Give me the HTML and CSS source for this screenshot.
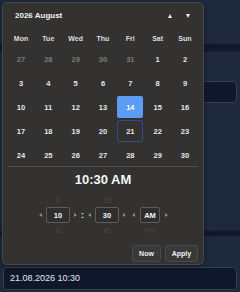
FILE: index.html
```html
<!DOCTYPE html>
<html>
<head>
<meta charset="utf-8">
<link rel="stylesheet" href="styles.css">
</head>
<body>
<div class="page">
  <div class="band band-top"></div>
  <div class="field field-mid"></div>
  <div class="band band-low"></div>
  <div class="field field-main">21.08.2026 10:30</div>

  <div class="picker">
    <div class="head">
      <span class="title">2026 August</span>
      <span class="navs"><span class="tri up"></span><span class="tri down"></span></span>
    </div>
    <div class="weekdays">
      <span>Mon</span><span>Tue</span><span>Wed</span><span>Thu</span><span>Fri</span><span>Sat</span><span>Sun</span>
    </div>
    <div class="days">
      <span class="d other">27</span><span class="d other">28</span><span class="d other">29</span><span class="d other">30</span><span class="d other">31</span><span class="d">1</span><span class="d">2</span>
      <span class="d">3</span><span class="d">4</span><span class="d">5</span><span class="d">6</span><span class="d">7</span><span class="d">8</span><span class="d">9</span>
      <span class="d">10</span><span class="d">11</span><span class="d">12</span><span class="d">13</span><span class="d sel">14</span><span class="d">15</span><span class="d">16</span>
      <span class="d">17</span><span class="d">18</span><span class="d">19</span><span class="d">20</span><span class="d today">21</span><span class="d">22</span><span class="d">23</span>
      <span class="d">24</span><span class="d">25</span><span class="d">26</span><span class="d">27</span><span class="d">28</span><span class="d">29</span><span class="d">30</span>
    </div>
    <div class="sep"></div>
    <div class="clock">10:30 AM</div>
    <div class="spinner">
      <div class="unit">
        <span class="ghost">9</span>
        <div class="unit-row"><span class="arr left"></span><span class="box">10</span><span class="arr right"></span></div>
        <span class="ghost">11</span>
      </div>
      <span class="colon">:</span>
      <div class="unit">
        <span class="ghost">15</span>
        <div class="unit-row"><span class="arr left"></span><span class="box">30</span><span class="arr right"></span></div>
        <span class="ghost">45</span>
      </div>
      <div class="unit unit-ampm">
        <span class="ghost"></span>
        <div class="unit-row"><span class="arr left"></span><span class="box box-ampm">AM</span><span class="arr right"></span></div>
        <span class="ghost">PM</span>
      </div>
    </div>
    <div class="actions">
      <span class="btn btn-now">Now</span>
      <span class="btn btn-apply">Apply</span>
    </div>
  </div>
</div>
</body>
</html>
```

FILE: styles.css
```css
* { box-sizing: border-box; }
html, body { margin: 0; padding: 0; }
body {
  width: 240px;
  height: 292px;
  background: #1e293b;
  font-family: "Liberation Sans", Arial, sans-serif;
  overflow: hidden;
}
.page {
  position: relative;
  width: 240px;
  height: 292px;
  display: flex;
  flex-direction: column;
}
.band {
  height: 9px;
  background: #111a2c;
  border-top: 1px solid #1a2435;
  border-bottom: 1px solid #1a2435;
}
.band-top { margin-top: 43px; }
.field {
  margin: 0 3px;
  background: #0f172a;
  border: 1px solid #334155;
  border-radius: 4px;
}
.field-mid { margin-top: 29px; height: 22px; }
.band-low { margin-top: 127px; height: 7px; }
.field-main {
  margin-top: 30px;
  height: 23px;
  color: #e5e7eb;
  font-size: 9px;
  line-height: 21px;
  padding-left: 6px;
}

.picker {
  position: absolute;
  left: 2px;
  top: 2px;
  width: 202px;
  height: 263px;
  background: #333231;
  border: 1px solid #474747;
  border-radius: 5px;
  padding: 0 5px 2px;
  display: flex;
  flex-direction: column;
  color: #ececec;
  font-weight: bold;
  box-shadow: 0 2px 6px rgba(0,0,0,0.35);
}
.head {
  height: 26px;
  display: flex;
  align-items: center;
  justify-content: space-between;
  padding: 0 8px 0 7px;
}
.title { font-size: 8px; color: #f2f2f2; }
.navs { display: flex; gap: 14px; align-items: center; }
.tri {
  width: 0; height: 0;
  border-left: 2.5px solid transparent;
  border-right: 2.5px solid transparent;
}
.tri.up { border-bottom: 4px solid #f0f0f0; }
.tri.down { border-top: 4px solid #f0f0f0; }

.weekdays, .days {
  display: grid;
  grid-template-columns: repeat(7, 26px);
  column-gap: 1.33px;
}
.weekdays { height: 20px; align-items: center; }
.weekdays span { text-align: center; font-size: 7px; color: #dedede; }
.days { grid-auto-rows: 22px; row-gap: 2px; }
.d {
  display: flex;
  align-items: center;
  justify-content: center;
  font-size: 7.5px;
  color: #e6e6e6;
  border-radius: 2px;
}
.d.other { color: #7a7a7a; }
.d.sel { background: #5b9cf4; color: #ffffff; }
.d.today { border: 1px solid #2c4f8c; }

.sep { height: 1px; background: #525252; margin-top: 0; }
.clock {
  height: 24px;
  padding-top: 2px;
  line-height: 22px;
  text-align: center;
  font-size: 13px;
  color: #f5f5f5;
}
.spinner {
  display: flex;
  justify-content: center;
  align-items: center;
  padding-left: 1px;
}
.unit { display: flex; flex-direction: column; align-items: center; }
.ghost {
  height: 16px;
  line-height: 16px;
  font-size: 7px;
  color: #4a4a4a;
  font-weight: normal;
}
.unit .ghost:first-child { padding-top: 2px; }
.unit-row { display: flex; align-items: center; gap: 4px; height: 16px; }
.arr { width: 0; height: 0; border-top: 2.5px solid transparent; border-bottom: 2.5px solid transparent; }
.arr.left { border-right: 3.5px solid #8a8a8a; }
.arr.right { border-left: 3.5px solid #8a8a8a; }
.box {
  width: 24px;
  height: 16px;
  border: 1px solid #5c5c5c;
  border-radius: 2px;
  background: #2f2e2d;
  display: flex;
  align-items: center;
  justify-content: center;
  font-size: 7.5px;
  color: #f5f5f5;
}
.box-ampm { width: 20px; margin: 0 1px 0 1px; }
.colon { font-size: 9px; margin: 0 4px 0 4px; color: #f0f0f0; }
.unit-ampm { margin-left: 6px; }

.actions {
  margin-top: 6px;
  display: flex;
  justify-content: flex-end;
  gap: 4px;
}
.btn {
  height: 17px;
  border: 1px solid #4a4a4a;
  background: #3a3939;
  border-radius: 3px;
  font-size: 7px;
  color: #f0f0f0;
  display: flex;
  align-items: center;
  justify-content: center;
}
.btn-now { width: 29px; }
.btn-apply { width: 33px; }
```
